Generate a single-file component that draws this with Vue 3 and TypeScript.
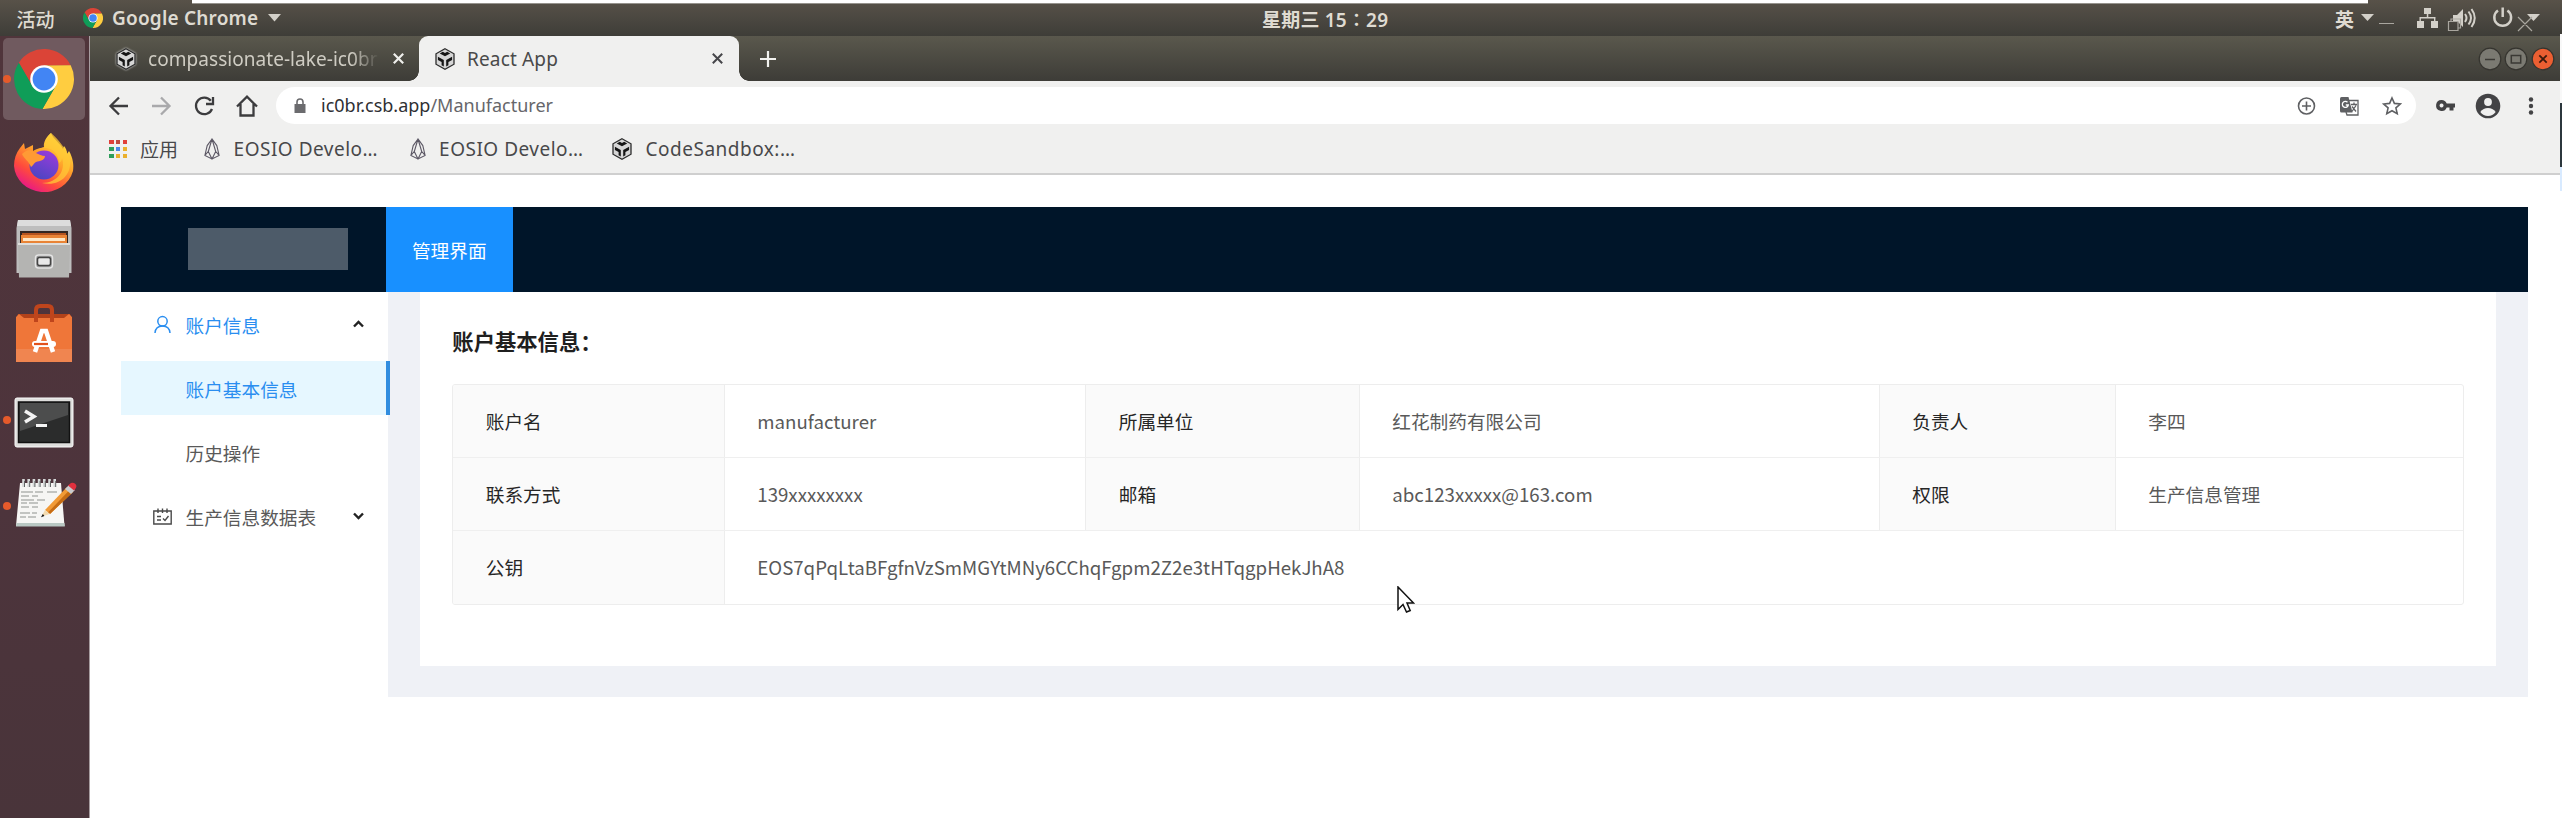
<script setup lang="ts">
interface Bookmark {
  title: string
  icon: 'eos' | 'csb'
  width: number
}
interface Cell {
  text: string
  label?: boolean
  span?: number
}

const bookmarks: Bookmark[] = [
  { title: 'EOSIO Develo…', icon: 'eos', width: 205.5 },
  { title: 'EOSIO Develo…', icon: 'eos', width: 202.5 },
  { title: 'CodeSandbox:…', icon: 'csb', width: 200 },
]

const appDots: string[] = [
  '#e0403a', '#c04a40', '#e0403a',
  '#2f9e5b', '#4a86e8', '#eab02c',
  '#2f9e5b', '#eab02c', '#eab02c',
]

const rows: Cell[][] = [
  [
    { text: '账户名', label: true }, { text: 'manufacturer' },
    { text: '所属单位', label: true }, { text: '红花制药有限公司' },
    { text: '负责人', label: true }, { text: '李四' },
  ],
  [
    { text: '联系方式', label: true }, { text: '139xxxxxxxx' },
    { text: '邮箱', label: true }, { text: 'abc123xxxxx@163.com' },
    { text: '权限', label: true }, { text: '生产信息管理' },
  ],
  [
    { text: '公钥', label: true },
    { text: 'EOS7qPqLtaBFgfnVzSmMGYtMNy6CChqFgpm2Z2e3tHTqgpHekJhA8', span: 5 },
  ],
]
</script>

<template>
  <div class="desktop">
    <svg class="defs" width="0" height="0">
      <symbol id="chrome" viewBox="-30 -30 60 60">
        <path d="M-25.2-16.3A30 30 0 0 1 26.7-13.6H0L-11.8 6.8Z" fill="#db4437" />
        <path d="M-25.2-16.3A30 30 0 0 1 26.7-13.6H0L-11.8 6.8Z" fill="#ffcd40" transform="rotate(120)" />
        <path d="M-25.2-16.3A30 30 0 0 1 26.7-13.6H0L-11.8 6.8Z" fill="#0f9d58" transform="rotate(240)" />
        <circle r="13.8" fill="#fff" />
        <circle r="11.4" fill="#4285f4" />
      </symbol>
      <symbol id="csb" viewBox="0 0 20 22">
        <path d="M10 .8 19 5.800V16.200L10 21.200 1 16.200V5.800Z" fill="#d6d6d6" stroke="#2c2c2c" stroke-width="1.300" />
        <path d="M4.800 5.400 7.800 3.700l2.200 1.200 2.200-1.200 3 1.700L10 8.300Z" fill="#151515" />
        <path d="M2.900 8.800 8.800 12V18.400L6.600 17.200V13.900L2.900 11.900Z" fill="#151515" />
        <path d="M17.100 8.800 11.200 12V18.400L13.400 17.200V13.900L17.100 11.900Z" fill="#151515" />
      </symbol>
      <symbol id="eos" viewBox="0 0 16 22">
        <path d="M8 1 3.200 7.600.9 17.400 8 21 15.100 17.400 12.800 7.600ZM8 1 4.300 13.500M8 1 11.700 13.500M.9 17.400 4.300 13.500 8 21 11.700 13.500 15.100 17.400" fill="none" stroke="#5d5966" stroke-width="1.100" />
      </symbol>
    </svg>

    <header class="topbar">
      <span class="activities">活动</span>
      <svg class="app-icon" width="20" height="20"><use href="#chrome" /></svg>
      <span class="app-name">Google Chrome</span>
      <svg class="caret" width="14" height="8"><path d="M0 0H13L6.500 7.500Z" fill="#d3d0c9" /></svg>
      <span class="clock">星期三 15∶29</span>
      <span class="ime">英</span>
      <svg class="status" width="186" height="24" viewBox="2358 6 186 24">
        <g fill="#d3d0c9">
          <path d="M2361 14H2374L2367.500 21Z" />
          <path d="M2424 8h7v6h-7zM2417 21h7v7h-7zM2431 21h7v7h-7zM2426.800 14h1.500v4h-1.500zM2419.500 17h16v1.400h-16zM2419.500 17h1.400v4h-1.400zM2434 17h1.400v4h-1.400z" />
          <path d="M2453 15h4l6-6v18l-6-6h-4z" />
          <path d="M2527 14H2540L2533.500 21Z" />
        </g>
        <g fill="none" stroke="#d3d0c9" stroke-width="2">
          <path d="M2465 14q3 4 0 8M2468.500 11.500q5 6.500 0 13M2471.500 9q6.500 9 0 18" />
          <path d="M2498 10.500a8.400 8.400 0 1 0 9.400 0M2502.700 7.500v9.500" stroke-width="2.500" />
        </g>
      </svg>
    </header>

    <div class="main">
      <nav class="dock">
        <div class="dock-item active running">
          <svg width="60" height="60"><use href="#chrome" /></svg>
        </div>
        <div class="dock-item">
          <svg width="62" height="64" viewBox="0 0 62 64">
            <defs>
              <linearGradient id="ff-body" x1="0.85" y1="0.05" x2="0.25" y2="1">
                <stop offset="0" stop-color="#fff04a" /><stop offset="0.4" stop-color="#ffa22a" />
                <stop offset="0.72" stop-color="#ff4b3c" /><stop offset="1" stop-color="#e5128f" />
              </linearGradient>
              <linearGradient id="ff-globe" x1="0.8" y1="0" x2="0.3" y2="1">
                <stop offset="0" stop-color="#9b3bdc" /><stop offset="1" stop-color="#4b45c2" />
              </linearGradient>
            </defs>
            <path d="M38 1c2 6 9 10 12 16l1-3c2 2 3 5 3 8l2-3c4 7 5 14 4 20A30 28 0 0 1 1 34C1 27 3 21 7 16l4-5 1 6 8-4v6c5-3 8-3 11-4C30 10 34 4 38 1Z" fill="url(#ff-body)" />
            <circle cx="31" cy="33" r="14.500" fill="url(#ff-globe)" />
            <path d="M9 22c4-4 8-5 12-2 4 2 8 4 11 4 0 4-5 5-9 6-3 2-3 4-5 5-2-6-7-8-9-13Z" fill="#ff9a35" />
            <path d="M31 16c7-1 15 5 15 15 2-1 3-3 3-5 4 12-4 25-20 25 18 4 30-8 28-24C54 18 45 7 38 1c-6 6-6 11-7 15Z" fill="#ffc935" opacity=".75" />
          </svg>
        </div>
        <div class="dock-item">
          <svg width="58" height="60" viewBox="0 0 58 60">
            <path d="M3 1h52l1.500 8v45h-55V9Z" fill="#bdbdbd" />
            <path d="M3 1h52l1 6H2Z" fill="#dcdcdc" />
            <path d="M5 12h48v14H5z" fill="#332723" />
            <path d="M7 14h44v4H7z" fill="#b5531f" />
            <path d="M6 16h46v9H6z" fill="#e98436" />
            <path d="M8 19h42v3H8z" fill="#ffe7c6" />
            <path d="M3 24h52l-1 34.500H4Z" fill="#b4b4b2" />
            <path d="M3 24h52v2H3z" fill="#dededc" />
            <rect x="20.500" y="36" width="17" height="13" rx="3" fill="#999" stroke="#e4e4e4" stroke-width="1.500" />
            <rect x="22.500" y="38.500" width="13" height="8" rx="2" fill="#e9e9e9" stroke="#444" stroke-width="1.500" />
          </svg>
        </div>
        <div class="dock-item bag">
          <svg width="58" height="62" viewBox="0 0 58 62">
            <path d="M3 12h52l2 6H1Z" fill="#b3421a" />
            <path d="M1 15 4 12l5 4H49l5-4 3 3V60H1Z" fill="#ef7639" />
            <path d="M1 47h56v13H1z" fill="#f08550" />
            <path d="M21 20V8q0-4 4-4h8q4 0 4 4v12" fill="none" stroke="#bf451c" stroke-width="4" />
            <path d="M20 50 27 29h4l7 21" fill="none" stroke="#fff" stroke-width="4.500" />
            <rect x="17" y="39" width="24" height="6" rx="3" fill="#fff" />
            <path d="M19 42h14" stroke="#e2521c" stroke-width="2.200" />
          </svg>
        </div>
        <div class="dock-item running terminal">
          <svg width="60" height="51" viewBox="0 0 60 51">
            <rect x="1" y="1" width="58" height="49" rx="2" fill="#dededc" stroke="#fafafa" />
            <rect x="4.500" y="5" width="51" height="40.500" fill="#2b2c2c" stroke="#111" stroke-width="1.500" />
            <path d="M6 6h48v12L6 34Z" fill="#4c4d4d" />
            <path d="M11 14 20 19.500 11 25" fill="none" stroke="#f4f4f4" stroke-width="3.500" />
            <path d="M22 28.500h11" stroke="#f4f4f4" stroke-width="3" />
          </svg>
        </div>
        <div class="dock-item running notes">
          <svg width="62" height="50" viewBox="0 0 62 50">
            <path d="M5 4H46L49.500 47H1Z" fill="#f6f6f4" />
            <path d="M1.500 44h48l.3 3.500H1Z" fill="#b9c8c3" />
            <path d="M6 13h12M20 13h8M32 13h10M6 17h8M17 17h6M6 21h13M22 21h8M6 24h6M14 24h9M6 28h8M17 28h6M5 34h10M17 34h5M5 38h6M13 38h8" stroke="#8d918e" stroke-width="1.200" />
            <path d="M8.500 0v8M13.700 0v8M18.900 0v8M24.100 0v8M29.300 0v8M34.500 0v8M39.700 0v8" stroke="#d5d8d8" stroke-width="2.600" />
            <path d="M9.500 2v6M14.700 2v6M19.900 2v6M25.100 2v6M30.300 2v6M35.500 2v6M40.700 2v6" stroke="#626565" stroke-width="1" />
            <path d="M30 31 52 8l6 5L35 35Z" fill="#f19a36" />
            <path d="M33 33.500 55 10.500l3 2.500L35 35Z" fill="#c66c14" />
            <path d="M30 31 26.500 37.500 35 35Z" fill="#f3dbb0" />
            <path d="M27.800 35 26 38.300 29.400 37Z" fill="#111" />
            <path d="m50 10 4-4 6 5-4 4Z" fill="#c9cccf" />
            <path d="m53 6.500 3-2.500q4-1 5.500 3 0 2-2.500 4.500Z" fill="#e0303e" />
          </svg>
        </div>
      </nav>

      <section class="browser">
        <div class="tabstrip">
          <div class="tab background">
            <svg class="fav halo" width="20" height="22"><use href="#csb" /></svg>
            <span class="tab-title faded">compassionate-lake-ic0br</span>
            <svg width="11" height="11"><path d="M.8.800 10.200 10.200M10.200.8.800 10.200" stroke="#efefec" stroke-width="2.200" /></svg>
          </div>
          <div class="tab current">
            <svg class="fav" width="20" height="22"><use href="#csb" /></svg>
            <span class="tab-title">React App</span>
            <svg width="11" height="11"><path d="M.8.800 10.200 10.200M10.200.8.800 10.200" stroke="#46464a" stroke-width="2" /></svg>
          </div>
          <svg class="new-tab" width="16" height="16"><path d="M8 0V16M0 8H16" stroke="#f2f2ef" stroke-width="2.200" /></svg>
          <div class="window-buttons">
            <svg width="24" height="24" viewBox="-12 -12 24 24"><circle r="10.800" fill="#7b7a72" stroke="#35342f" stroke-width="1.200" /><path d="M-5 .5H5" stroke="#3a3934" stroke-width="1.500" /></svg>
            <svg width="24" height="24" viewBox="-12 -12 24 24"><circle r="10.800" fill="#7b7a72" stroke="#35342f" stroke-width="1.200" /><path d="M-4.700-3.500H4.700V4H-4.700Z" fill="none" stroke="#3a3934" stroke-width="1.500" /></svg>
            <svg width="24" height="24" viewBox="-12 -12 24 24"><circle r="10.800" fill="#ec5f32" stroke="#35342f" stroke-width="1.200" /><path d="M-3.700-3.700 3.700 3.700M3.700-3.700-3.700 3.700" stroke="#3d1a0d" stroke-width="1.700" /></svg>
          </div>
        </div>

        <div class="toolbar">
          <svg class="nav-icons" width="152" height="24" viewBox="108 93.500 152 24">
            <g fill="none" stroke="#3c3c3e" stroke-width="2.300">
              <path d="M128 105.500H111M119 97 110.500 105.500 119 114" />
              <path d="M152 105.500H169M161 97 169.500 105.500 161 114" stroke="#a9a9ab" />
              <path d="M210.800 100.200A8.300 8.300 0 1 0 212 108.500M213 96.500V103.500H206" />
              <path d="M237 106 247 96.200 257 106M240.500 103.500V115H253.500V103.500" />
            </g>
          </svg>
          <div class="address">
            <svg width="12" height="16" viewBox="0 0 12 16"><path d="M.5 6h11v9H.5z" fill="#6b6b6e" /><path d="M3 6.500V4a3 3 0 0 1 6 0v2.500" fill="none" stroke="#6b6b6e" stroke-width="1.600" /></svg>
            <span class="url">ic0br.csb.app<span>/Manufacturer</span></span>
            <svg class="address-icons" width="106" height="22" viewBox="2296 94.500 106 22">
              <g fill="none" stroke="#5f6063" stroke-width="1.600">
                <circle cx="2306.500" cy="105.500" r="8" />
                <path d="M2306.500 101v9M2302 105.500h9" />
                <path d="M2349 100h9v14.500h-11l-1-3M2351 104h6M2354 102v2M2352 111l4-6M2352 106l4 5" stroke-width="1.300" />
                <path d="m2392 97.500 2.400 5.400 5.900.6-4.400 3.900 1.300 5.800-5.200-3-5.200 3 1.300-5.800-4.400-3.900 5.900-.6Z" />
              </g>
              <path d="M2341.500 96.500h7l4 15.500h-11q-1.500 0-1.500-1.500V98q0-1.500 1.500-1.500Z" fill="#5f6063" />
              <path d="M2347.500 101.800a3 3 0 1 0 .8 2.700h-2.500" fill="none" stroke="#fff" stroke-width="1.300" />
            </svg>
          </div>
          <svg class="tool-icons" width="104" height="26" viewBox="2434 92.500 104 26">
            <g fill="#434345">
              <path fill-rule="evenodd" d="M2441.500 99.500a5.500 5.500 0 0 1 5.200 3.500h8.300v4h-1.500v3h-4v-3h-2.800a5.500 5.500 0 1 1-5.200-7.500Zm0 3.500a2 2 0 1 0 .1 0Z" />
              <circle cx="2488" cy="105.500" r="12.300" />
              <circle cx="2531" cy="99" r="2.200" /><circle cx="2531" cy="105.500" r="2.200" /><circle cx="2531" cy="112" r="2.200" />
            </g>
            <circle cx="2488" cy="101.500" r="3.900" fill="#f0f0ef" />
            <path d="M2480.300 111.500q3-4 7.700-4t7.700 4q-3 4-7.700 4t-7.700-4Z" fill="#f0f0ef" />
          </svg>
        </div>

        <div class="bookmarks">
          <div class="apps-grid"><i v-for="(c, i) in appDots" :key="i" :style="{ background: c }"></i></div>
          <span class="apps-label">应用</span>
          <div v-for="(b, i) in bookmarks" :key="i" class="bookmark" :style="{ width: b.width + 'px' }">
            <svg :width="b.icon === 'csb' ? 20 : 16" height="22"><use :href="'#' + b.icon" /></svg>
            <span>{{ b.title }}</span>
          </div>
        </div>

        <main class="page">
          <div class="app-header">
            <div class="logo"></div>
            <div class="header-item">管理界面</div>
          </div>
          <div class="app-body">
            <aside class="sider">
              <div class="menu-item open">
                <svg class="menu-icon" width="19" height="19" viewBox="0 0 19 19"><circle cx="9.500" cy="6.300" r="4.700" fill="none" stroke="currentColor" stroke-width="1.500" /><path d="M2 18q.6-7 7.500-7t7.500 7" fill="none" stroke="currentColor" stroke-width="1.500" /></svg>
                <span>账户信息</span>
                <svg class="arrow" width="11" height="8"><path d="M1 6.500 5.500 2 10 6.500" fill="none" stroke="#222" stroke-width="2.400" /></svg>
              </div>
              <div class="menu-item sub selected"><span>账户基本信息</span></div>
              <div class="menu-item sub"><span>历史操作</span></div>
              <div class="menu-item">
                <svg class="menu-icon" width="19" height="19" viewBox="0 0 19 19"><path d="M.8 4H18.200V17H.8ZM5 1.500V6M9.500 1.500V6M14 1.500V6M4 9.500H8M4 13H8M10 11.500 12 13.500 15.500 9" fill="none" stroke="#4a4a4a" stroke-width="1.400" /></svg>
                <span>生产信息数据表</span>
                <svg class="arrow" width="11" height="8"><path d="M1 1.500 5.500 6 10 1.500" fill="none" stroke="#222" stroke-width="2.400" /></svg>
              </div>
            </aside>
            <div class="content">
              <div class="card">
                <h3>账户基本信息：</h3>
                <div class="table">
                  <div v-for="(row, r) in rows" :key="r" class="row">
                    <div
                      v-for="(cell, c) in row"
                      :key="c"
                      class="cell"
                      :class="{ label: cell.label, wide: cell.span }"
                    >{{ cell.text }}</div>
                  </div>
                </div>
              </div>
            </div>
          </div>
        </main>
      </section>
    </div>

    <div class="top-strip"></div>
    <div class="edge"></div>
    <svg class="ghost-controls" width="156" height="20" viewBox="2378 14 156 20"><g fill="none" stroke="#a9a69f" stroke-width="1.200"><path d="M2379 23.500h15M2448.500 21.500h9.500v9h-9.500zM2451 21.500v-2.500h9.500v9h-2.500M2518 17l14 14M2532 17l-14 14" /></g></svg>
    <svg class="pointer" width="18" height="28" viewBox="0 0 18 28"><path d="M1 1V23.500L6 18.500 9.500 26 13.200 24.500 10 17H16.500Z" fill="#fff" stroke="#111" stroke-width="1.500" /></svg>
  </div>
</template>

<style>
html,
body {
  margin: 0;
  overflow: hidden;
  background: #fff;
}
</style>

<style scoped>
.desktop {
  position: relative;
  width: 2562px;
  height: 818px;
  overflow: hidden;
  display: flex;
  flex-direction: column;
  font-family: "Noto Sans", "Noto Sans CJK SC", sans-serif;
  background: #fff;
  white-space: nowrap;
}
.desktop svg { display: block; flex: none; }
.desktop .defs { position: absolute; }

.topbar {
  display: grid;
  grid-template-columns: 83px 29px 156px 994px 1073px 23px 204px;
  align-items: center;
  height: 36px;
  flex: none;
  background: linear-gradient(#585249, #3e3d38);
  color: #dfdbd2;
  font-size: 19px;
  font-weight: 600;
  line-height: 30px;
}
.activities { padding-left: 16.500px; font-weight: 500; padding-top: 3px; }
.app-name { letter-spacing: 0.2px; }
.clock { padding-top: 3px; letter-spacing: 0.2px; }
.ime { padding-top: 3px; }

.main { display: flex; flex: 1; min-height: 0; }
.dock {
  width: 90px;
  flex: none;
  background: linear-gradient(#50353b, #4d343c 60%, #49343a);
  border-right: 1px solid #a79da0;
  box-sizing: border-box;
}
.dock-item {
  position: relative;
  display: flex;
  align-items: center;
  justify-content: center;
  height: 85.33px;
  padding-right: 1px;
  box-sizing: border-box;
}
.dock-item.bag { padding-bottom: 3px; }
.dock-item.terminal { padding-top: 5px; }
.dock-item.notes { padding-bottom: 2px; padding-left: 4px; }
.dock-item.active::before {
  content: "";
  position: absolute;
  inset: 1.500px 4px 1.500px 3px;
  border-radius: 5px;
  background: #705a5f;
}
.dock-item svg { position: relative; }
.dock-item.running::after {
  content: "";
  position: absolute;
  left: 2.500px;
  top: 39px;
  width: 8px;
  height: 8px;
  border-radius: 50%;
  background: #e55a2b;
}

.browser { flex: 1; display: flex; flex-direction: column; min-width: 0; }
.tabstrip {
  display: flex;
  height: 45px;
  flex: none;
  align-items: center;
  background: linear-gradient(#5a584d, #3d3c37);
}
.tab { position: relative; display: flex; align-items: center; box-sizing: border-box; height: 45px; }
.tab.background { width: 329px; padding-left: 26px; color: #cfccc3; }
.tab.current {
  width: 320px;
  padding-left: 16px;
  background: #f0f0ef;
  color: #4a4a4a;
  border-radius: 9px 9px 0 0;
}
.tab.current::before,
.tab.current::after {
  content: "";
  position: absolute;
  bottom: 0;
  width: 10px;
  height: 10px;
}
.tab.current::before { left: -10px; background: radial-gradient(circle at 0 0, transparent 9.500px, #f0f0ef 10px); }
.tab.current::after { right: -10px; background: radial-gradient(circle at 100% 0, transparent 9.500px, #f0f0ef 10px); }
.halo { filter: drop-shadow(0 0 1px #ddd); }
.tab-title { font-size: 19px; line-height: 26px; margin-left: 12px; overflow: hidden; }
.background .tab-title { width: 231px; margin-right: 14px; letter-spacing: 0.05px; }
.current .tab-title { width: 233px; margin-right: 11.500px; letter-spacing: 0.15px; }
.faded { -webkit-mask-image: linear-gradient(90deg, #000 88%, transparent); mask-image: linear-gradient(90deg, #000 88%, transparent); }
.new-tab { margin-left: 21px; }
.window-buttons { display: flex; gap: 2.700px; margin-left: auto; margin-right: 7px; }

.toolbar { display: flex; align-items: center; height: 49px; flex: none; background: #f0f0ef; padding-left: 18px; }
.address {
  display: flex;
  align-items: center;
  width: 2140px;
  height: 37px;
  margin-left: 16px;
  padding-left: 18px;
  box-sizing: border-box;
  border-radius: 19px;
  background: #fff;
}
.url { margin-left: 15px; margin-top: -2px; font-size: 18px; line-height: 26px; color: #2f2f33; }
.url span { color: #66666a; }
.address-icons { margin-left: auto; margin-right: 14px; }
.tool-icons { margin-left: 18px; }

.bookmarks {
  display: flex;
  align-items: center;
  height: 45px;
  flex: none;
  padding: 0 0 5px 19px;
  box-sizing: border-box;
  background: #f0f0ef;
  border-bottom: 2px solid #cfcfcf;
  color: #48484a;
  font-size: 19px;
}
.apps-grid { display: grid; grid-template-columns: repeat(3, 4.500px); gap: 2.300px; margin-right: 13px; }
.apps-grid i { height: 4.500px; }
.apps-label { width: 64px; }
.bookmark { display: flex; align-items: center; }
.bookmark span { margin-left: 13.500px; letter-spacing: 0.5px; }

.page {
  flex: 1;
  padding: 31.500px 34px 0 31px;
  font-family: "Noto Sans CJK SC", sans-serif;
  font-size: 18.667px;
  color: #595959;
  background: #fff;
}
.app-header { display: flex; height: 85.500px; background: #001529; }
.logo { width: 160px; height: 41.500px; margin: 21.500px 37.500px 0 67px; background: #4d5b69; }
.header-item { width: 127.500px; line-height: 85px; text-align: center; color: #fff; background: #1890ff; }
.app-body { display: flex; }
.sider { width: 267.300px; flex: none; padding-top: 5.500px; box-sizing: border-box; }
.menu-item { display: flex; align-items: center; height: 53.330px; margin-bottom: 10.670px; padding-left: 32px; box-sizing: border-box; }
.menu-item span { margin-left: 13.500px; }
.menu-item .arrow { margin-left: auto; margin-right: 24.500px; margin-top: -1px; }
.menu-item.open { color: #2a8ef0; }
.menu-item.sub { padding-left: 51px; }
.menu-item.selected { position: relative; width: 268.500px; color: #2a8ef0; background: #e6f7ff; border-right: 4px solid #318ddf; }
.content { flex: 1; height: 405px; padding: 0 32px; box-sizing: border-box; background: #eff1f6; }
.card { height: 373.500px; padding: 32px 32px 0; box-sizing: border-box; background: #fff; }
h3 { margin: 0 0 25.500px; font-size: 21.333px; line-height: 34px; font-weight: 700; color: #1f1f1f; }
.table { border: 1.333px solid #ededed; border-radius: 3px; overflow: hidden; }
.row { display: grid; grid-template-columns: 271.500px 361.500px 273.500px 520px 236px 1fr; }
.row + .row { border-top: 1.500px solid #efefef; }
.cell { height: 72.400px; line-height: 72px; padding-left: 32.500px; box-sizing: border-box; border-right: 1px solid #ededed; }
.cell:last-child { border-right: 0; }
.cell.wide { grid-column: span 5; }
.cell.label { color: #262626; background: #fafafa; }

.top-strip { position: absolute; left: 192px; top: 0; width: 2176px; height: 4px; background: #fff; border-bottom: 1px solid #96938d; box-sizing: border-box; }
.edge { position: absolute; right: 0; top: 34px; width: 2px; height: 157px; background: linear-gradient(#f8f8f8 69px, #2c373d 69px, #2c373d 133px, #d8eaff 133px); }
.ghost-controls { position: absolute; left: 2378px; top: 14px; }
.pointer { position: absolute; left: 1396.500px; top: 585.500px; }
</style>
